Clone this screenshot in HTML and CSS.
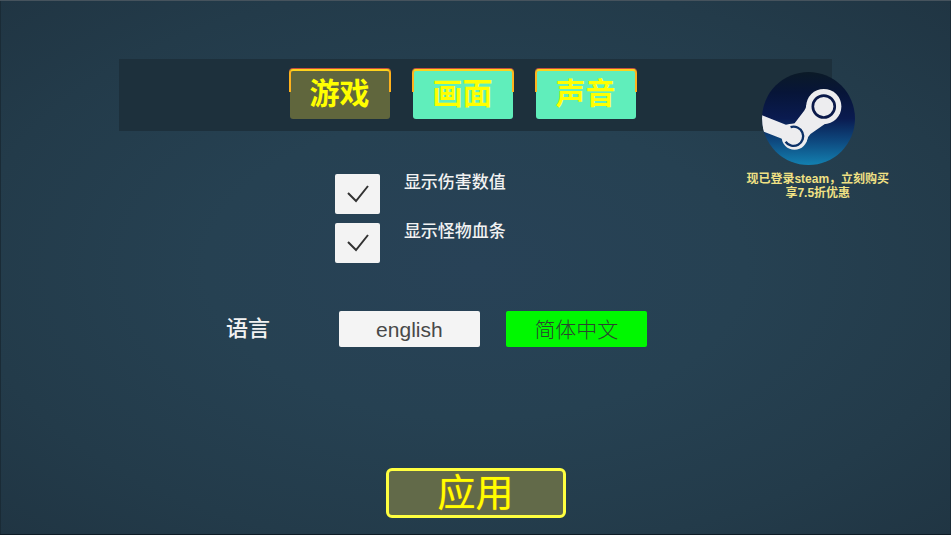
FILE: index.html
```html
<!DOCTYPE html>
<html lang="zh-CN">
<head>
<meta charset="utf-8">
<meta name="viewport" content="width=device-width, initial-scale=1">
<title>设置</title>
<link rel="stylesheet" href="styles.css">
</head>
<body>
<main class="settings">
  <nav class="tabs">
    <button class="tab tab-active" type="button">游戏</button>
    <button class="tab" type="button">画面</button>
    <button class="tab" type="button">声音</button>
  </nav>

  <a class="promo" href="#steam">
    <svg class="promo-logo" viewBox="66 66 280 280" aria-hidden="true">
      <defs>
        <linearGradient id="disc" x1="0" y1="0" x2="0" y2="1">
          <stop offset="0" stop-color="#0b1a27"/>
          <stop offset="0.22" stop-color="#071538"/>
          <stop offset="0.5" stop-color="#0a1b50"/>
          <stop offset="0.75" stop-color="#0e4a80"/>
          <stop offset="1" stop-color="#1380b0"/>
        </linearGradient>
        <clipPath id="round"><circle cx="206" cy="206" r="140"/></clipPath>
      </defs>
      <g clip-path="url(#round)">
        <rect x="66" y="66" width="280" height="280" fill="url(#disc)"/>
        <g fill="#ededef">
          <circle cx="252" cy="170" r="53"/>
          <path d="M200 164 Q199 174 193 183 L163 222 L140 240 L200 276 Q202 262 212 253 L254 223 Z"/>
          <circle cx="164" cy="261" r="39"/>
          <path d="M60 194 L138 225 Q146 222 164 221 L170 260 L140 275 L126 267 L60 241 Z"/>
        </g>
        <circle cx="252" cy="170" r="33" fill="none" stroke="#0b1a4a" stroke-width="8"/>
        <path d="M152 232 A29 29 0 1 1 137 276" fill="none" stroke="#0d3268" stroke-width="7"/>
      </g>
    </svg>
    <span class="promo-text">现已登录steam，立刻购买<br>享7.5折优惠</span>
  </a>

  <form class="form">
    <div class="checks">
      <label class="check"><input type="checkbox" checked><span>显示伤害数值</span></label>
      <label class="check"><input type="checkbox" checked><span>显示怪物血条</span></label>
    </div>
    <div class="language" role="group" aria-labelledby="language-name">
      <span class="language-name" id="language-name">语言</span>
      <button class="choice" type="button">english</button>
      <button class="choice choice-active" type="button">简体中文</button>
    </div>
    <button class="apply" type="button">应用</button>
  </form>
</main>
</body>
</html>
```
FILE: styles.css
```css
* {
  box-sizing: border-box;
}

body {
  margin: 0;
  min-height: 100vh;
  border-top: 1px solid #46535d;
  border-bottom: 1px solid #0e1c26;
  box-shadow: inset 1px 0 #1a2b36, inset -1px 0 #1a2b36;
  background: radial-gradient(ellipse at center, #284257 0%, #264152 40%, #233b4a 75%, #203543 100%);
  font-family: "Liberation Sans", "Noto Sans CJK SC", sans-serif;
  color: #f2f2f2;
}

button {
  margin: 0;
  padding: 0;
  font-family: inherit;
  line-height: 1;
  cursor: pointer;
}

.settings {
  position: relative;
  width: 75%;
  margin: 0 auto;
  padding-top: 58px;
}

.tabs {
  display: flex;
  justify-content: center;
  gap: 23px;
  padding: 10px 26px 12px 0;
  background: #1d303c;
}

.tab {
  position: relative;
  width: 100px;
  height: 50px;
  border: 0;
  border-radius: 3px;
  background: #60eebb;
  color: #ffff00;
  font-size: 30px;
  font-weight: 700;
}

/* Gold trim round the upper half of a tab */
.tab::before {
  content: "";
  position: absolute;
  inset: 0 -1px 27px;
  border: 2px solid #ffb21c;
  border-top-color: #ffd21c;
  border-bottom: 0;
  border-radius: 4px 4px 0 0;
  box-shadow: 0 -1px 0 #c8503c;
}

.tab-active {
  background: #60663d;
}

.promo {
  position: absolute;
  top: 71px;
  right: -57px;
  display: flex;
  flex-direction: column;
  align-items: center;
  color: #f0e184;
  text-decoration: none;
}

.promo-logo {
  width: 93px;
  height: 93px;
  margin-right: 18px;
}

.promo-text {
  margin-top: 7px;
  font-size: 12px;
  font-weight: 700;
  line-height: 14px;
  text-align: center;
  white-space: nowrap;
}

.form {
  display: flex;
  flex-direction: column;
  padding-top: 43px;
}

.checks {
  display: flex;
  flex-direction: column;
  align-items: flex-start;
  gap: 9px;
  padding-left: 216px;
}

.check {
  display: flex;
  gap: 24px;
  font-size: 17px;
  font-weight: 500;
  line-height: 18px;
}

.check input {
  appearance: none;
  width: 45px;
  height: 40px;
  margin: 0;
  border-radius: 2px;
  background: #f3f3f3 url("data:image/svg+xml,%3Csvg xmlns='http://www.w3.org/2000/svg' viewBox='0 0 45 40' fill='none' stroke='%23323232' stroke-width='2'%3E%3Cpath d='M13 19L21 27L33 12'/%3E%3C/svg%3E") center / 45px 40px no-repeat;
}

.language {
  display: flex;
  align-items: center;
  margin-top: 48px;
  padding-left: 107px;
}

.language-name {
  width: 113px;
  font-size: 22px;
  font-weight: 500;
  line-height: 24px;
}

.choice {
  width: 141px;
  height: 36px;
  border: 0;
  border-radius: 2px;
  background: #f4f4f4;
  color: #484848;
  font-size: 21px;
}

.choice-active {
  margin-left: 26px;
  background: #00f800;
  color: #2b442f;
  font-weight: 300;
}

.apply {
  align-self: center;
  width: 180px;
  height: 50px;
  margin-top: 121px;
  border: 3px solid #ffff40;
  border-radius: 6px;
  background: #626a49;
  color: #ffff00;
  font-size: 38px;
  text-shadow: 0 0 1px #ffa500;
}
```
